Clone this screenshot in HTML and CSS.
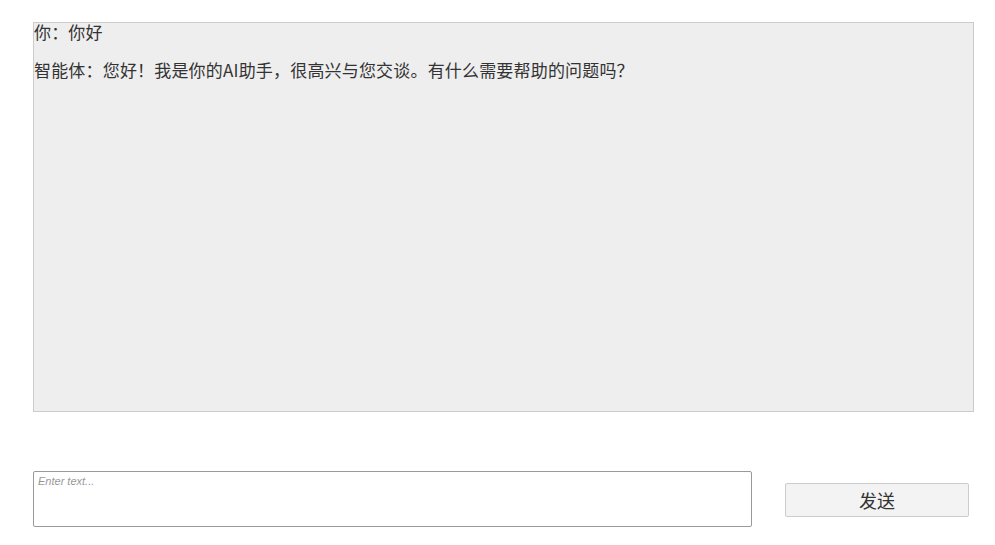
FILE: index.html
```html
<!DOCTYPE html>
<html lang="zh-CN">
<head>
<meta charset="utf-8">
<title>Chat</title>
<link rel="stylesheet" href="styles.css">
</head>
<body>
<div class="app">
  <div class="chat-box">
    <p class="msg msg-first">你：你好</p>
    <p class="msg">智能体：您好！我是你的AI助手，很高兴与您交谈。有什么需要帮助的问题吗？</p>
  </div>
  <div class="input-row">
    <textarea class="input" placeholder="Enter text..."></textarea>
    <button class="send">发送</button>
  </div>
</div>
</body>
</html>
```
FILE: styles.css
```css
html, body {
  margin: 0;
  padding: 0;
  background: #fff;
}
.app {
  padding: 22px 0 0 33px;
  font-family: "Noto Sans CJK SC", "Noto Sans", sans-serif;
}
.chat-box {
  box-sizing: border-box;
  width: 941px;
  height: 390px;
  background: #eeeeee;
  border: 1px solid #cccccc;
  overflow: hidden;
}
.msg {
  margin: 0;
  font-size: 17px;
  line-height: 20px;
  letter-spacing: 0.18px;
  color: #333;
}
.msg-first {
  margin-top: -1px;
  margin-bottom: 18px;
}
.input-row {
  display: flex;
  align-items: center;
  gap: 33px;
  margin-top: 59px;
}
.input {
  box-sizing: border-box;
  width: 719px;
  height: 56px;
  border: 1px solid #999;
  border-radius: 2px;
  padding: 3px 4px;
  resize: none;
  font-family: "Liberation Sans", Arial, sans-serif;
  font-size: 11px;
  margin: 0;
}
.input::placeholder {
  color: #999;
  font-style: italic;
}
.send {
  box-sizing: border-box;
  width: 184px;
  height: 34px;
  background: #f3f3f3;
  border: 1px solid #ccc;
  border-radius: 2px;
  font-family: "Noto Sans CJK SC", sans-serif;
  font-size: 18px;
  color: #333;
  padding: 0;
  margin-top: 1px;
}
```
